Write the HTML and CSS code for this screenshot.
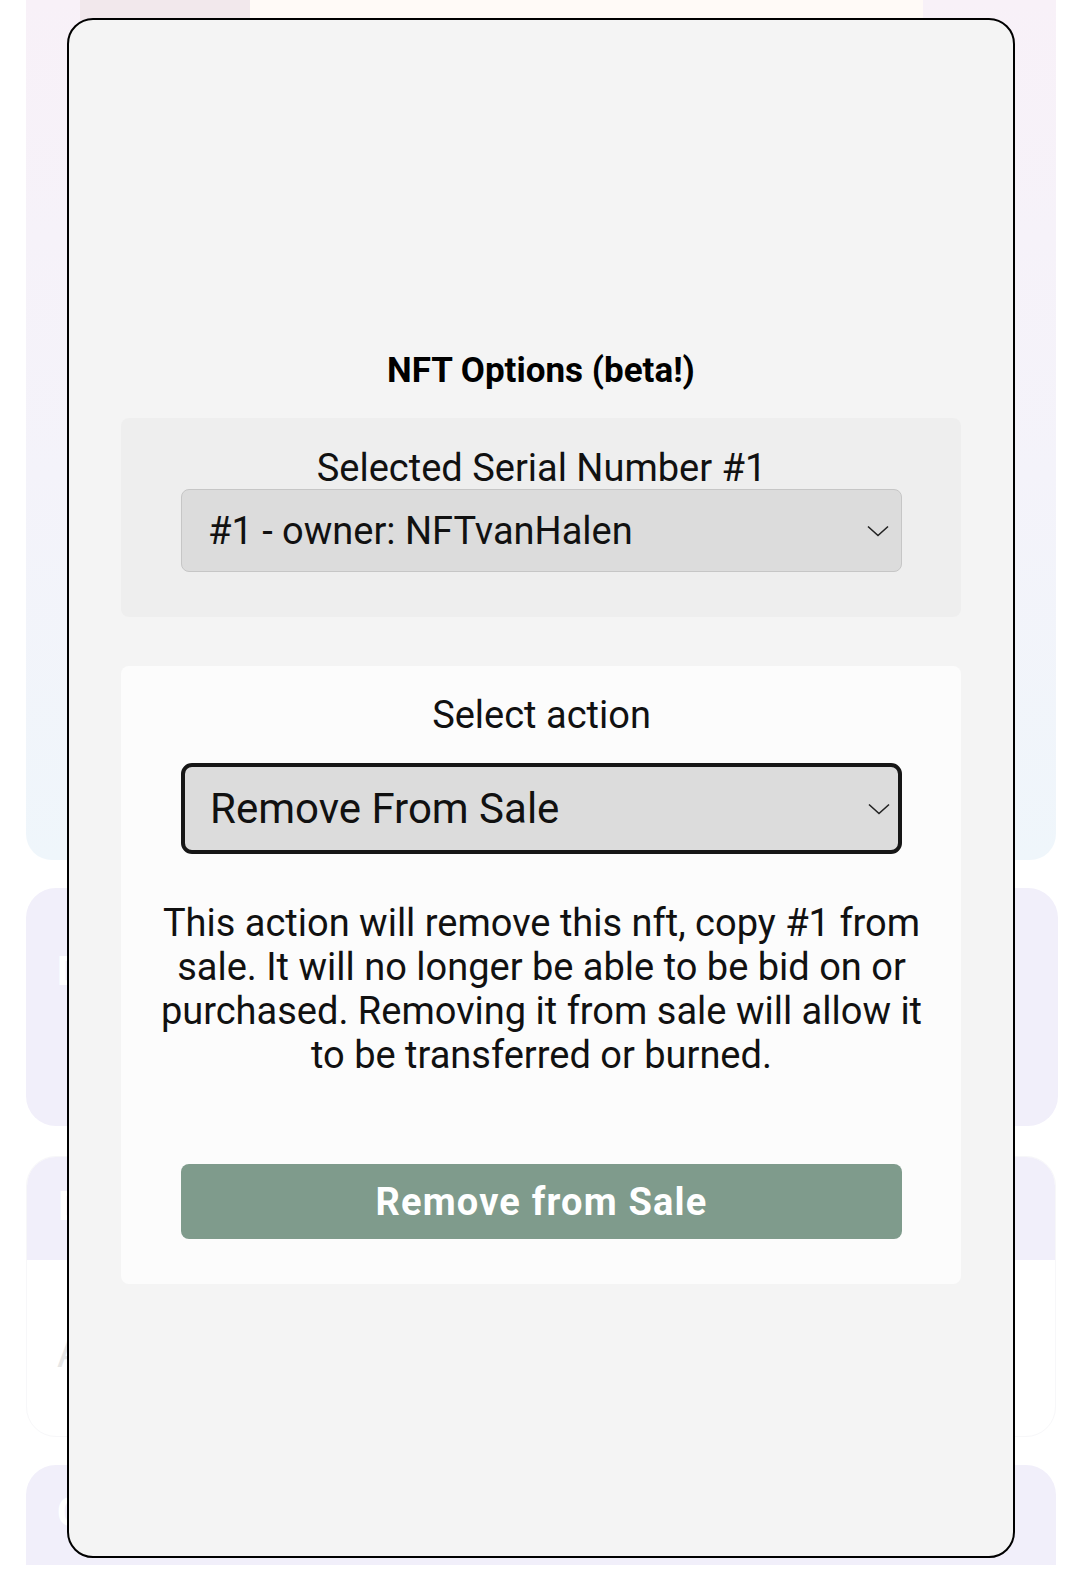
FILE: index.html
```html
<!DOCTYPE html>
<html lang="en">
<head>
<meta charset="utf-8">
<title>NFT Options</title>
<link rel="stylesheet" href="styles.css">
</head>
<body>
<div class="page">
  <div class="hero-card">
    <div class="hero-top">
      <div class="hero-image"></div>
      <div class="hero-panel"></div>
    </div>
  </div>
  <div class="card card-desc"><span class="card-title">D</span></div>
  <div class="card card-details">
    <div class="card-head"><span class="card-title">D</span></div>
    <div class="card-body"><span class="card-muted">A</span></div>
  </div>
  <div class="card card-coll"><span class="card-title">C</span></div>
</div>

<div class="modal">
  <h2 class="modal-title">NFT Options (beta!)</h2>
  <div class="panel panel-serial">
    <div class="field-label">Selected Serial Number #1</div>
    <div class="select select-light">
      <span>#1 - owner: NFTvanHalen</span>
      <svg class="chev" width="22" height="12" viewBox="0 0 22 12"><path d="M1 1.5 L11 10.5 L21 1.5" fill="none" stroke="#222" stroke-width="1.6"/></svg>
    </div>
  </div>
  <div class="panel panel-action">
    <div class="field-label">Select action</div>
    <div class="select select-strong">
      <span>Remove From Sale</span>
      <svg class="chev" width="22" height="12" viewBox="0 0 22 12"><path d="M1 1.5 L11 10.5 L21 1.5" fill="none" stroke="#222" stroke-width="1.6"/></svg>
    </div>
    <p class="action-text">This action will remove this nft, copy #1 from sale. It will no longer be able to be bid on or purchased. Removing it from sale will allow it to be transferred or burned.</p>
    <button class="action-btn">Remove from Sale</button>
  </div>
</div>
</body>
</html>
```

FILE: styles.css
```css
* { box-sizing: border-box; }

html, body {
  margin: 0;
  padding: 0;
  background: #ffffff;
  font-family: Roboto, "Noto Sans", sans-serif;
  color: #111;
}

body {
  width: 1080px;
  height: 1585px;
  overflow: hidden;
  position: relative;
}

.page {
  display: flex;
  flex-direction: column;
  gap: 28px;
  padding: 0 24px 0 26px;
}

.hero-card {
  height: 860px;
  border-radius: 0 0 26px 26px;
  background: linear-gradient(180deg, #f8f1f8 0%, #f4f3fa 55%, #eff6fb 100%);
}

.hero-top {
  display: flex;
  height: 20px;
  padding-left: 54px;
}

.hero-image {
  width: 170px;
  background: #f2e8ec;
}

.hero-panel {
  width: 673px;
  background: #fffaf7;
}

.card {
  border-radius: 30px;
  background: #f1effa;
}

.card-title {
  display: block;
  font-size: 40px;
  line-height: 44px;
  font-weight: 700;
  color: #ffffff;
  margin-left: 31px;
}

.card-desc {
  height: 238px;
  margin-right: -2px;
  padding-top: 62px;
}

.card-details {
  height: 281px;
  margin-top: 2px;
  background: #ffffff;
  border: 1px solid #f7f7f9;
  border-radius: 30px;
  overflow: hidden;
}

.card-head {
  height: 103px;
  background: #f1effa;
  padding-top: 28px;
}

.card-body {
  padding-top: 72px;
}

.card-muted {
  display: block;
  font-size: 40px;
  line-height: 44px;
  color: #e6e6e6;
  margin-left: 30px;
}

.card-coll {
  height: 100px;
  border-radius: 30px 30px 0 0;
  padding-top: 26px;
}

/* Modal overlay */
.modal {
  position: absolute;
  left: 67px;
  top: 18px;
  width: 948px;
  height: 1540px;
  border: 2px solid #000;
  border-radius: 26px;
  background: #f4f4f4;
  padding: 332px 52px 0 52px;
  display: flex;
  flex-direction: column;
}

.modal-title {
  margin: 0 0 28px 0;
  text-align: center;
  font-size: 35px;
  line-height: 38px;
  font-weight: 700;
  color: #000;
}

.panel {
  border-radius: 8px;
}

.panel-serial {
  background: #eeeeee;
  padding: 29px 59px 45px 60px;
}

.panel-action {
  background: #fcfcfc;
  margin-top: 49px;
  padding: 28px 59px 45px 60px;
}

.field-label {
  text-align: center;
  font-size: 38px;
  line-height: 42px;
  color: #111;
}

.select {
  display: flex;
  align-items: center;
  justify-content: space-between;
  background: #dcdcdc;
  color: #111;
}

.select-light {
  height: 83px;
  border: 1px solid #c6c6c6;
  border-radius: 8px;
  padding: 0 12px 0 26px;
  font-size: 38px;
}

.select-strong {
  height: 91px;
  margin-top: 27px;
  border: 4px solid #161616;
  border-radius: 11px;
  padding: 0 8px 0 25px;
  font-size: 42px;
}

.chev {
  display: block;
  flex: none;
}

.action-text {
  margin: 47px -30px 0 -30px;
  padding: 0;
  text-align: center;
  font-size: 38px;
  line-height: 44px;
  color: #111;
}

.action-btn {
  margin-top: 87px;
  height: 75px;
  width: 100%;
  border: none;
  border-radius: 8px;
  background: #7f9b8c;
  color: #ffffff;
  font-family: Roboto, "Noto Sans", sans-serif;
  font-size: 38px;
  font-weight: 700;
  letter-spacing: 1.2px;
}
```
